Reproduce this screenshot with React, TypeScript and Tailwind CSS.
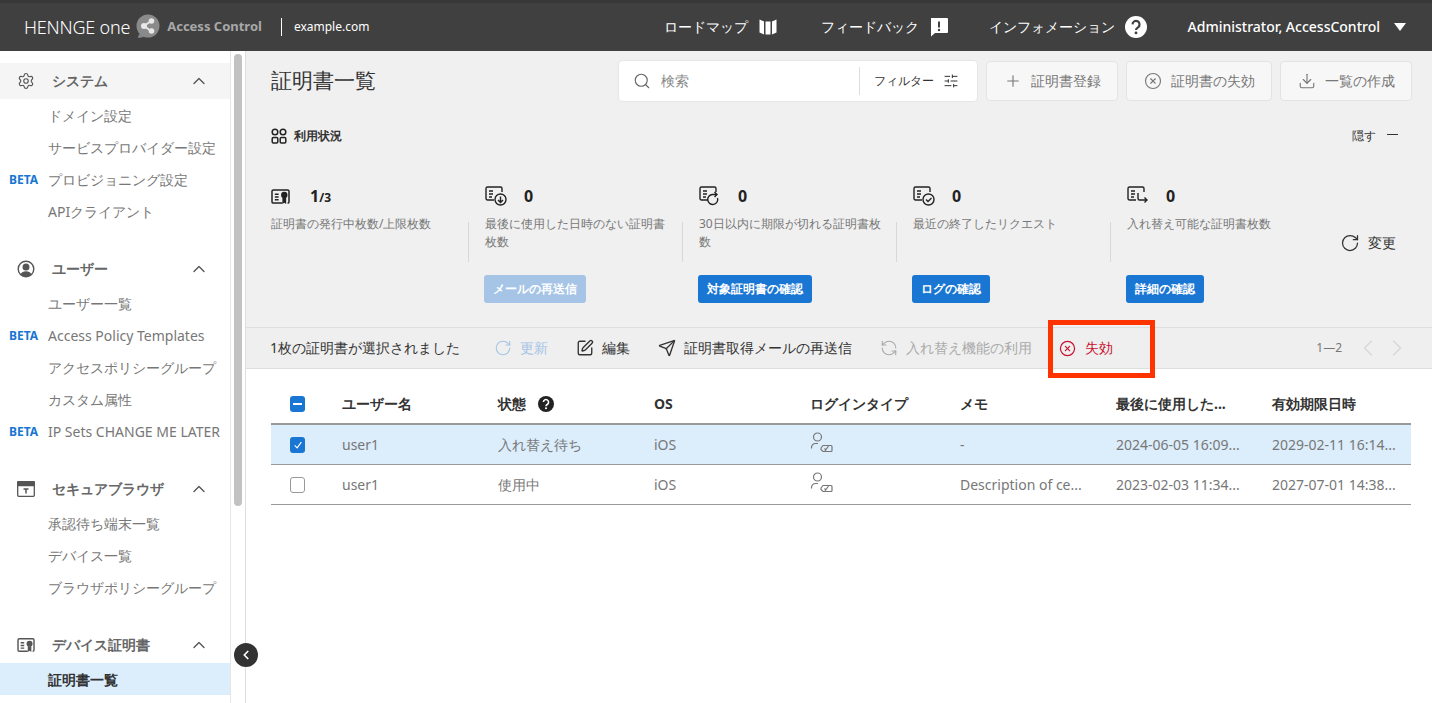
import { ChevronLeft, ChevronRight, ChevronUp, Download, Plus, RefreshCcw, RotateCw, Search, Send, Settings, SlidersHorizontal, SquarePen, CircleX } from "lucide-react";
import type { ReactNode } from "react";

// small hand drawn icons that the packages don't have
const CertIcon = ({ className = "" }: { className?: string }) => (
  <svg viewBox="0 0 20 18" className={className} fill="none" stroke="currentColor" strokeWidth="1.6">
    <path d="M12 16H2.500A1.500 1.500 0 0 1 1 14.500v-11A1.500 1.500 0 0 1 2.500 2h15A1.500 1.500 0 0 1 19 3.500v11a1.500 1.500 0 0 1-1.500 1.500" />
    <path d="M4 6.500h4M4 9.500h4M4 12.500h4" />
    <circle cx="14" cy="7.500" r="2.600" fill="currentColor" />
    <path d="M12 10.500h4v6.500l-2-1.400-2 1.400z" fill="currentColor" stroke="none" />
  </svg>
);

const DocBase = ({ children }: { children: ReactNode }) => (
  <svg viewBox="0 0 22 22" className="w-[22px] h-[22px]" fill="none" stroke="currentColor" strokeWidth="1.400">
    <path d="M9 15H2.500A1.500 1.500 0 0 1 1 13.500v-10A1.500 1.500 0 0 1 2.500 2h13A1.500 1.500 0 0 1 17 3.500V7" />
    <path d="M4 6h4M4 9h4M4 12h3" />
    {children}
  </svg>
);

const DocDownload = () => (
  <DocBase>
    <circle cx="15.500" cy="14.500" r="5.500" />
    <path d="M15.500 11.500v6M13 15l2.500 2.500L18 15" />
  </DocBase>
);
const DocRefresh = () => (
  <DocBase>
    <path d="M18.500 13a5 5 0 1 1-5-3.500h4M15.500 7l2.500 2.500-2.500 2.500" />
  </DocBase>
);
const DocCheck = () => (
  <DocBase>
    <circle cx="15.500" cy="14.500" r="5.500" />
    <path d="M13 14.500l2 2 3.500-3.500" />
  </DocBase>
);
const DocSwap = () => (
  <DocBase>
    <path d="M11 8v5.500a1.500 1.500 0 0 0 1.500 1.500H20M17.500 12.500L20 15l-2.500 2.500" />
  </DocBase>
);

const HelpDot = ({ className = "" }: { className?: string }) => (
  <svg viewBox="0 0 20 20" className={className}>
    <circle cx="10" cy="10" r="10" fill="currentColor" />
    <path d="M6.800 7.600a3.200 3.200 0 1 1 5 2.700c-1.100.7-1.800 1.200-1.800 2.500" fill="none" stroke="var(--hole, #fff)" strokeWidth="2" />
    <circle cx="10" cy="15.400" r="1.300" fill="var(--hole, #fff)" />
  </svg>
);

const LoginTypeIcon = () => (
  <svg viewBox="0 0 24 22" className="w-6 h-[22px] text-[#777]" fill="none" stroke="currentColor" strokeWidth="1.200">
    <circle cx="7.500" cy="5" r="4" />
    <path d="M1.500 16.500v-1A4 4 0 0 1 5.500 11.500H8" />
    <path d="M11 16l2-2.500h8a1 1 0 0 1 1 1v4a1 1 0 0 1-1 1h-8l-2-2z" />
    <path d="M15 19l3.500-5M14.500 16.500l1.500 1.500" />
  </svg>
);

const UserCircle = () => (
  <svg viewBox="0 0 18 18" className="w-[18px] h-[18px] text-[#555]" fill="none" stroke="currentColor" strokeWidth="1.400">
    <circle cx="9" cy="9" r="7.800" />
    <circle cx="9" cy="7" r="2.800" fill="currentColor" />
    <path d="M3.500 14.500c1-2.300 3-3.300 5.500-3.300s4.500 1 5.500 3.300A7.800 7.800 0 0 1 9 16.800a7.800 7.800 0 0 1-5.500-2.300z" fill="currentColor" stroke="none" />
  </svg>
);

const BrowserIcon = () => (
  <svg viewBox="0 0 18 16" className="w-[18px] h-[16px] text-[#555]" fill="none" stroke="currentColor" strokeWidth="1.300">
    <rect x="0.700" y="0.700" width="16.600" height="14.600" rx="1" />
    <path d="M0.700 1h16.600v3.500H0.700z" fill="currentColor" />
    <path d="M6.500 8h5M9 8v4.500" strokeWidth="1.500" />
  </svg>
);

const MapIcon = () => (
  <svg viewBox="0 0 20 20" className="w-5 h-5 text-white" fill="currentColor">
    <path d="M1.500 2.500l4.500 2v13l-4.500-2zM7.500 4.500h5v13h-5zM14 4.500l4.500-2v13l-4.500 2z" />
  </svg>
);

const FeedbackIcon = () => (
  <svg viewBox="0 0 20 20" className="w-5 h-5 text-white">
    <path d="M2 1h16a1 1 0 0 1 1 1v13a1 1 0 0 1-1 1H6l-4 3.500z" fill="currentColor" />
    <path d="M10 4.500v6" stroke="#404040" strokeWidth="2" />
    <circle cx="10" cy="13" r="1.200" fill="#404040" />
  </svg>
);

const LogoMark = () => (
  <svg viewBox="0 0 24 26" className="w-6 h-[26px]">
    <circle cx="12" cy="12" r="11.500" fill="#8a8a8a" />
    <path d="M3 20l-1 4 6-1z" fill="#8a8a8a" />
    <g fill="none" stroke="#e8e8e8" strokeWidth="1.800">
      <path d="M8 12l7-5M8 12l7 5" />
    </g>
    <circle cx="8" cy="12" r="3" fill="#e8e8e8" />
    <circle cx="15.500" cy="7" r="2.800" fill="#e8e8e8" />
    <circle cx="15.500" cy="17" r="2.800" fill="#e8e8e8" />
  </svg>
);

const Grid4 = () => (
  <svg viewBox="0 0 16 16" className="w-4 h-4 text-[#222]" fill="none" stroke="currentColor" strokeWidth="1.500">
    <circle cx="4" cy="4" r="2.800" />
    <circle cx="12" cy="4" r="2.800" />
    <rect x="1.200" y="9.500" width="5.600" height="5.500" rx="1.200" />
    <rect x="9.200" y="9.500" width="5.600" height="5.500" rx="1.200" />
  </svg>
);

type NavItem = { label: string; beta?: boolean; active?: boolean };
type NavGroup = { title: string; icon: ReactNode; tinted?: boolean; items: NavItem[]; gap: string };

const groups: NavGroup[] = [
  {
    title: "システム",
    icon: <Settings className="w-[18px] h-[18px] text-[#555]" strokeWidth={1.5} />,
    tinted: true,
    gap: "mb-6",
    items: [{ label: "ドメイン設定" }, { label: "サービスプロバイダー設定" }, { label: "プロビジョニング設定", beta: true }, { label: "APIクライアント" }],
  },
  {
    title: "ユーザー",
    icon: <UserCircle />,
    gap: "mb-6",
    items: [
      { label: "ユーザー一覧" },
      { label: "Access Policy Templates", beta: true },
      { label: "アクセスポリシーグループ" },
      { label: "カスタム属性" },
      { label: "IP Sets CHANGE ME LATER", beta: true },
    ],
  },
  {
    title: "セキュアブラウザ",
    icon: <BrowserIcon />,
    gap: "mb-6",
    items: [{ label: "承認待ち端末一覧" }, { label: "デバイス一覧" }, { label: "ブラウザポリシーグループ" }],
  },
  {
    title: "デバイス証明書",
    icon: <CertIcon className="w-[18px] h-4 text-[#555]" />,
    gap: "",
    items: [{ label: "証明書一覧", active: true }],
  },
];

const stats = [
  { icon: <DocDownload />, label: "最後に使用した日時のない証明書枚数", button: "メールの再送信", off: true },
  { icon: <DocRefresh />, label: "30日以内に期限が切れる証明書枚数", button: "対象証明書の確認" },
  { icon: <DocCheck />, label: "最近の終了したリクエスト", button: "ログの確認" },
  { icon: <DocSwap />, label: "入れ替え可能な証明書枚数", button: "詳細の確認" },
];

const rows = [
  { sel: true, user: "user1", state: "入れ替え待ち", memo: "-", last: "2024-06-05 16:09...", exp: "2029-02-11 16:14..." },
  { sel: false, user: "user1", state: "使用中", memo: "Description of ce...", last: "2023-02-03 11:34...", exp: "2027-07-01 14:38..." },
];

const cols = "grid grid-cols-[71px_156px_156px_156px_150px_156px_156px_139px]";

function Sidebar() {
  return (
    <aside className="relative w-[246px] shrink-0 flex border-r border-[#dedede] bg-white">
      <nav className="w-[231px] shrink-0 pt-3 border-r border-[#e6e6e6] overflow-hidden">
        {groups.map((g) => (
          <div key={g.title} className={g.gap}>
            <div className={`h-9 flex items-center pl-[17px] pr-[21px] ${g.tinted ? "bg-[#f5f5f5]" : ""}`}>
              <span className="w-[18px] flex justify-center">{g.icon}</span>
              <span className="ml-[17px] text-sm font-bold text-[#666]">{g.title}</span>
              <ChevronUp className="ml-auto w-5 h-5 text-[#555]" strokeWidth={1.600} />
            </div>
            {g.items.map((it) => (
              <div key={it.label} className={`h-8 flex items-center pl-[9px] pt-[2px] whitespace-nowrap ${it.active ? "bg-[#dcedfc]" : ""}`}>
                <span className="w-[39px] text-xs font-bold text-[#1976d2]">{it.beta ? "BETA" : ""}</span>
                <span className={`text-sm ${it.active ? "font-bold text-[#333]" : "text-[#777]"}`}>{it.label}</span>
              </div>
            ))}
          </div>
        ))}
      </nav>
      <div className="flex-1 pt-[3px] flex justify-center">
        <div className="w-2 h-[452px] rounded bg-[#c2c2c2]" />
      </div>
      <button className="absolute left-[234px] top-[592px] w-6 h-6 rounded-full bg-[#333] flex items-center justify-center">
        <ChevronLeft className="w-3.5 h-3.5 text-white" strokeWidth={3} />
      </button>
    </aside>
  );
}

function Toolbar() {
  return (
    <div className="h-[42px] flex items-center">
      <h1 className="text-[21px] text-[#333]">証明書一覧</h1>
      <div className="ml-auto w-[360px] h-[42px] flex items-center bg-white border border-[#e6e6e6] rounded pl-[14px]">
        <Search className="w-[18px] h-[18px] text-[#666]" strokeWidth={1.500} />
        <span className="ml-[10px] text-sm text-[#888]">検索</span>
        <div className="ml-auto h-7 border-l border-[#ddd] pl-[14px] pr-[18px] flex items-center">
          <span className="text-xs font-medium text-[#333]">フィルター</span>
          <SlidersHorizontal className="ml-[9px] w-4 h-4 text-[#333]" strokeWidth={1.500} />
        </div>
      </div>
      <TopButton icon={<Plus className="w-[18px] h-[18px]" strokeWidth={1.500} />} width="w-[132px]" label="証明書登録" />
      <TopButton icon={<CircleX className="w-[18px] h-[18px]" strokeWidth={1.500} />} width="w-[146px]" label="証明書の失効" />
      <TopButton icon={<Download className="w-[18px] h-[18px]" strokeWidth={1.500} />} width="w-[132px]" label="一覧の作成" />
    </div>
  );
}

function TopButton({ icon, label, width }: { icon: ReactNode; label: string; width: string }) {
  return (
    <button className={`ml-2 h-10 ${width} flex items-center justify-center gap-[9px] bg-[#f7f7f7] border border-[#e3e3e3] rounded text-sm text-[#777]`}>
      {icon}
      {label}
    </button>
  );
}

function Usage() {
  return (
    <>
      <div className="mt-[26px] h-4 flex items-center">
        <Grid4 />
        <span className="ml-[7px] text-xs font-bold text-[#333]">利用状況</span>
        <span className="ml-auto text-xs text-[#333]">隠す</span>
        <span className="ml-[11px] mr-[14px] -mt-1 w-[11px] border-t border-[#333]" />
      </div>
      <div className="mt-[41px] h-[119px] flex">
        <div className="w-[197px] shrink-0">
          <div className="h-[22px] flex items-center text-[#222]">
            <CertIcon className="w-[19px] h-[17px]" />
            <span className="ml-5 text-base font-bold">1</span>
            <span className="text-xs font-bold mt-[3px]">/3</span>
          </div>
          <p className="mt-2 text-xs leading-[18px] text-[#777]">証明書の発行中枚数/上限枚数</p>
        </div>
        {stats.map((s) => (
          <div key={s.button} className="w-[214px] shrink-0 flex">
            <div className="mt-[37px] h-10 w-px bg-[#d8d8d8] mr-4 shrink-0" />
            <div className="w-[185px]">
              <div className="h-[22px] flex items-center text-[#222]">
                {s.icon}
                <span className="ml-[17px] text-base font-bold">0</span>
              </div>
              <p className="mt-2 h-[60px] text-xs leading-[18px] text-[#777]">{s.label}</p>
              <button className={`-ml-px h-7 px-[9px] rounded-[3px] text-xs font-bold text-white ${s.off ? "bg-[#a5c4e6]" : "bg-[#1976d2]"}`}>
                {s.button}
              </button>
            </div>
          </div>
        ))}
        <div className="ml-auto mr-4 mt-[48px] h-5 flex items-center gap-2 text-sm font-medium text-[#333]">
          <RotateCw className="w-5 h-5" strokeWidth={1.500} />
          変更
        </div>
      </div>
    </>
  );
}

function ActionBar() {
  return (
    <div className="h-[42px] pl-6 pr-[21px] flex items-center bg-[#efefef] border-y border-[#dedede] whitespace-nowrap text-sm">
      <span className="text-[#333]">1枚の証明書が選択されました</span>
      <span className="ml-[34px] flex items-center gap-2 text-[#a5c4e6]">
        <RotateCw className="w-[18px] h-[18px]" strokeWidth={1.400} />
        更新
      </span>
      <span className="ml-[28px] flex items-center gap-2 font-medium text-[#333]">
        <SquarePen className="w-[18px] h-[18px]" strokeWidth={1.800} />
        編集
      </span>
      <span className="ml-[28px] flex items-center gap-2 font-medium text-[#333]">
        <Send className="w-[18px] h-[18px]" strokeWidth={1.800} />
        証明書取得メールの再送信
      </span>
      <span className="ml-[28px] flex items-center gap-2 text-[#aaa]">
        <RefreshCcw className="w-[18px] h-[18px]" strokeWidth={1.500} />
        入れ替え機能の利用
      </span>
      <span className="relative ml-[27px] flex items-center gap-[9px] font-medium text-[#c8102e]">
        <CircleX className="w-[17px] h-[17px]" strokeWidth={1.700} />
        失効
        <span className="absolute -left-[11px] -top-[18px] w-[107px] h-[58px] border-[5px] border-[#ff3300]" />
      </span>
      <span className="ml-auto text-xs text-[#777]">1—2</span>
      <ChevronLeft className="ml-3 w-7 h-7 text-[#d8d8d8]" strokeWidth={1.200} />
      <ChevronRight className="ml-px w-7 h-7 text-[#d8d8d8]" strokeWidth={1.200} />
    </div>
  );
}

function Checkbox({ state }: { state: "all" | "on" | "off" }) {
  if (state === "off") {
    return <span className="w-[15px] h-4 rounded-[3px] border border-[#999] bg-white" />;
  }
  return (
    <span className="w-[15px] h-4 rounded-[3px] bg-[#1976d2] flex items-center justify-center">
      {state === "all" ? (
        <span className="w-[9px] h-0.5 bg-white" />
      ) : (
        <svg viewBox="0 0 12 12" className="w-[10px] h-[10px]" fill="none" stroke="#fff" strokeWidth="1.400">
          <path d="M2 6.500l3 3 5-7" />
        </svg>
      )}
    </span>
  );
}

function CertTable() {
  return (
    <div className="mt-4 ml-[25px] mr-[21px] text-sm">
      <div className={`${cols} h-[40px] items-center border-b-2 border-[#999] font-bold text-[#333] whitespace-nowrap`}>
        <span className="pl-[19px] flex"><Checkbox state="all" /></span>
        <span>ユーザー名</span>
        <span className="flex items-center gap-3">
          状態 <HelpDot className="w-4 h-4 text-[#222]" />
        </span>
        <span>OS</span>
        <span>ログインタイプ</span>
        <span>メモ</span>
        <span>最後に使用した...</span>
        <span>有効期限日時</span>
      </div>
      {rows.map((r) => (
        <div key={r.last} className={`${cols} h-10 items-center border-b border-[#999] text-[#777] whitespace-nowrap ${r.sel ? "bg-[#dcedfc]" : ""}`}>
          <span className="pl-[19px] flex"><Checkbox state={r.sel ? "on" : "off"} /></span>
          <span>{r.user}</span>
          <span>{r.state}</span>
          <span>iOS</span>
          <span className="-mt-1"><LoginTypeIcon /></span>
          <span>{r.memo}</span>
          <span>{r.last}</span>
          <span>{r.exp}</span>
        </div>
      ))}
    </div>
  );
}

export default function App() {
  return (
    <div className="h-screen overflow-hidden flex flex-col bg-white font-['Noto_Sans_CJK_JP','Noto_Sans',sans-serif]">
      <header className="h-[51px] shrink-0 flex items-center bg-[#404040] border-t-[3px] border-[#383838] text-white whitespace-nowrap pl-6 pr-[26px]">
        <span className="font-['Inter',sans-serif] font-light text-[18px] tracking-[-0.2px]">HENNGE one</span>
        <span className="ml-[6px]"><LogoMark /></span>
        <span className="ml-[7px] text-[13px] font-bold text-[#a8a8a8]">Access Control</span>
        <span className="ml-[19px] h-[18px] border-l border-white" />
        <span className="ml-[12px] text-xs">example.com</span>
        <span className="ml-auto text-sm font-medium">ロードマップ</span>
        <span className="ml-[10px]"><MapIcon /></span>
        <span className="ml-[43px] text-sm font-medium">フィードバック</span>
        <span className="ml-[10px]"><FeedbackIcon /></span>
        <span className="ml-[40px] text-sm font-medium">インフォメーション</span>
        <span className="ml-[10px] [--hole:#404040]"><HelpDot className="w-[22px] h-[22px] text-white" /></span>
        <span className="ml-[41px] text-sm font-medium">Administrator, AccessControl</span>
        <svg viewBox="0 0 12 8" className="ml-[14px] w-3 h-2 text-white" fill="currentColor">
          <path d="M0 0h12L6 8z" />
        </svg>
      </header>
      <div className="flex-1 flex min-h-0">
        <Sidebar />
        <main className="flex-1 min-w-0">
          <div className="bg-[#f0f0f0] pt-[9px] pl-[25px] pr-[20px] h-[276px]">
            <Toolbar />
            <Usage />
          </div>
          <ActionBar />
          <CertTable />
        </main>
      </div>
    </div>
  );
}
